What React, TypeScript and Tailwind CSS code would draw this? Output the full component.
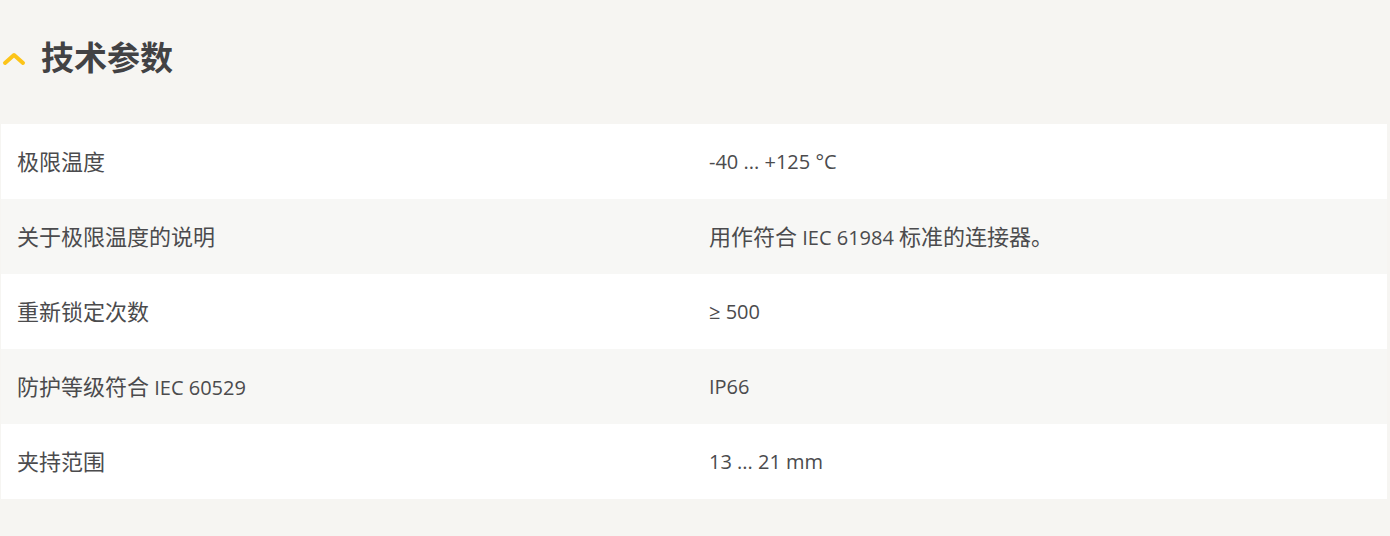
const rows: [string, string][] = [
  ["极限温度", "-40 ... +125 °C"],
  ["关于极限温度的说明", "用作符合 IEC 61984 标准的连接器。"],
  ["重新锁定次数", "≥ 500"],
  ["防护等级符合 IEC 60529", "IP66"],
  ["夹持范围", "13 ... 21 mm"],
];

// CJK glyphs render a bit larger than the latin text on the source page
function Mixed({ text }: { text: string }) {
  const parts = text.split(/([\u3000-\u303f\u4e00-\u9fff]+)/).filter(Boolean);
  return (
    <>
      {parts.map((p, i) =>
        /[\u3000-\u303f\u4e00-\u9fff]/.test(p) ? (
          <span key={i} className="text-[22px]">
            {p}
          </span>
        ) : (
          <span key={i}>{p}</span>
        )
      )}
    </>
  );
}

export default function App() {
  return (
    <div
      className="min-h-[536px] w-[1390px] bg-[#f6f5f2] text-[#4b4b4d]"
      style={{ fontFamily: '"Open Sans", "Noto Sans CJK SC", sans-serif' }}
    >
      <div className="flex h-[124px] items-center pb-[8px]">
        <svg width="26" height="16" viewBox="0 0 26 16" className="ml-[1px] mr-[14px]">
          <path d="M4 13 L13 5 L22 13" fill="none" stroke="#fcc419" strokeWidth="4" strokeLinecap="round" strokeLinejoin="round" />
        </svg>
        <h2 className="text-[33px] font-bold text-[#424244]">技术参数</h2>
      </div>
      <div className="mx-[1px] w-[1386px]">
        {rows.map(([k, v], i) => (
          <div
            key={k}
            className={`grid h-[75px] grid-cols-[708px_1fr] items-center text-[20px] ${i % 2 ? "bg-[#f7f7f5]" : "bg-white"}`}
          >
            <div className="pl-[16px]">
              <Mixed text={k} />
            </div>
            <div>
              <Mixed text={v} />
            </div>
          </div>
        ))}
      </div>
    </div>
  );
}
